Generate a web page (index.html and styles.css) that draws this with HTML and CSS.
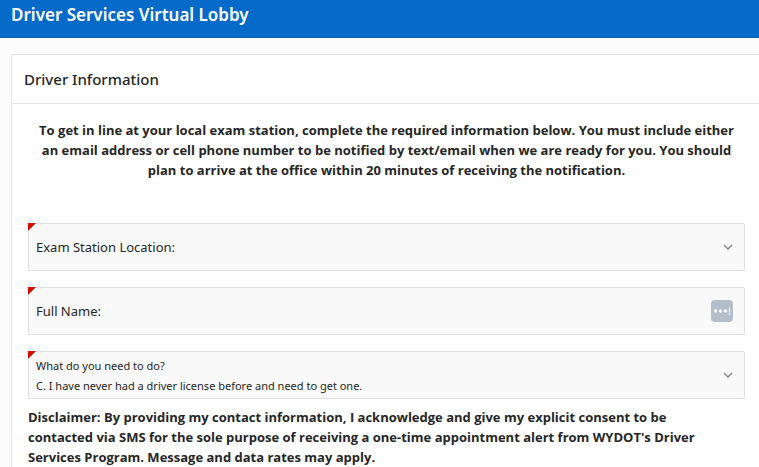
FILE: index.html
```html
<!DOCTYPE html>
<html lang="en">
<head>
<meta charset="utf-8">
<title>Driver Services Virtual Lobby</title>
<link rel="stylesheet" href="styles.css">
</head>
<body>
<header class="topbar"><a class="brand" href="#">Driver Services Virtual Lobby</a></header>
<main class="card">
  <h2 class="card-title">Driver Information</h2>
  <form class="card-body">
    <p class="intro">To get in line at your local exam station, complete the required information below. You must include either<br>an email address or cell phone number to be notified by text/email when we are ready for you. You should<br>plan to arrive at the office within 20 minutes of receiving the notification.</p>
    <div class="field">
      <label class="label" for="station">Exam Station Location:</label>
      <select class="control" id="station"><option></option></select>
      <svg class="chevron" viewBox="0 0 10 6" aria-hidden="true"><path d="M1 1l4 4 4-4"/></svg>
    </div>
    <div class="field">
      <label class="label" for="name">Full Name:</label>
      <input class="control" id="name" type="text">
      <button class="fill" type="button" aria-label="Fill in name">
        <svg class="fill-icon" viewBox="0 0 22 22" aria-hidden="true"><rect width="22" height="22" rx="4" fill="#b4bdca"/><g fill="#fff"><circle cx="4.5" cy="11" r="1.7"/><circle cx="9.5" cy="11" r="1.7"/><circle cx="14.5" cy="11" r="1.7"/><rect x="18" y="7" width="1" height="8"/></g></svg>
      </button>
    </div>
    <div class="field filled">
      <label class="label" for="need">What do you need to do?</label>
      <select class="control" id="need"><option>C. I have never had a driver license before and need to get one.</option></select>
      <svg class="chevron" viewBox="0 0 10 6" aria-hidden="true"><path d="M1 1l4 4 4-4"/></svg>
    </div>
    <p class="disclaimer">Disclaimer: By providing my contact information, I acknowledge and give my explicit consent to be<br>contacted via SMS for the sole purpose of receiving a one-time appointment alert from WYDOT's Driver<br>Services Program. Message and data rates may apply.</p>
  </form>
</main>
</body>
</html>
```
FILE: styles.css
```css
* { box-sizing: border-box; }
body {
  margin: 0;
  background: #fcfcfc;
  color: #262626;
  font-family: "Segoe UI", "Noto Sans", sans-serif;
  font-size: 13px;
  line-height: 20px;
  overflow-x: hidden;
}
.topbar {
  padding: 3px 11px 10px;
  background: #056ac8;
  border-bottom: 1px solid #045fb4;
}
.brand {
  display: block;
  color: #fff;
  font-size: 17px;
  font-weight: 600;
  line-height: 24px;
  text-decoration: none;
}
.card {
  margin: 16px 0 0 11px;
  background: #fff;
  border: 1px solid #e6e6e6;
  border-width: 1px 0 0 1px;
  border-top-left-radius: 2px;
}
.card-title {
  margin: 0;
  padding: 12px;
  border-bottom: 1px solid #e6e6e6;
  font-size: 15px;
  font-weight: 500;
  line-height: 24px;
}
.card-body { padding: 16px 14px 0 16px; }
.intro, .disclaimer {
  margin: 0;
  font-family: "Segoe UI", "Open Sans", sans-serif;
  font-weight: 700;
}
.intro { margin-bottom: 43px; text-align: center; }
.field {
  position: relative;
  height: 48px;
  margin-bottom: 16px;
  background: #f9f9f9;
  border: 1px solid #dfdfdf;
  border-radius: 2px;
}
.field::before {
  content: "";
  position: absolute;
  top: -1px;
  left: -1px;
  border-top: 8px solid #c10;
  border-right: 8px solid transparent;
}
.filled { margin-bottom: 8px; }
.label {
  position: absolute;
  top: 13px;
  left: 7px;
  pointer-events: none;
}
.control {
  display: block;
  width: 100%;
  height: 100%;
  padding: 0 40px 0 7px;
  appearance: none;
  background: transparent;
  border: 0;
  color: inherit;
  font: inherit;
}
.filled .label { top: 4px; font-size: 11px; }
.filled .control { padding-top: 22px; font-size: 11px; }
.chevron {
  position: absolute;
  top: 20px;
  right: 11px;
  width: 10px;
  height: 6px;
  fill: none;
  stroke: #808080;
  stroke-width: 1.3;
  pointer-events: none;
}
.fill {
  position: absolute;
  top: 12px;
  right: 11px;
  padding: 0;
  background: none;
  border: 0;
}
.fill-icon { display: block; width: 22px; height: 22px; }
```
